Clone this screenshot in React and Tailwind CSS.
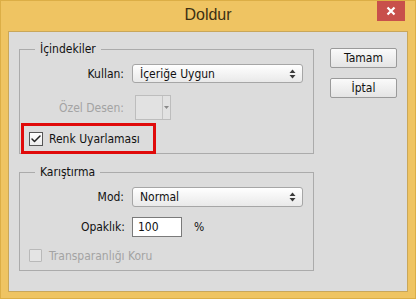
import { Check } from "lucide-react"

const ui = { fontFamily: '"DejaVu Sans Condensed", "DejaVu Sans", sans-serif' }

function Arrows() {
  return (
    <svg width="7" height="10" viewBox="0 0 7 10" className="shrink-0">
      <path d="M3.5 0.5 L6.5 4 L0.5 4 Z" fill="#3a3a3a" />
      <path d="M3.5 9.5 L6.5 6 L0.5 6 Z" fill="#3a3a3a" />
    </svg>
  )
}

function Select({ value, h }) {
  return (
    <div
      className={`flex w-[171px] items-center justify-between rounded-[3px] border border-[#a6a6a6] bg-gradient-to-b from-white to-[#e9e9e9] pl-[7px] pr-[6px] text-[12px] text-[#111] ${h}`}
    >
      <span>{value}</span>
      <Arrows />
    </div>
  )
}

function Group({ title, className, children }) {
  return (
    <div className={`relative w-[295px] border border-[#ababab] ${className}`}>
      <span className="absolute left-[15px] top-[-9px] bg-[#dcdcdc] px-[5px] text-[12px] leading-[16px] text-[#111]">
        {title}
      </span>
      {children}
    </div>
  )
}

function Button({ children, className }) {
  return (
    <div
      className={`flex h-[20px] w-[67px] items-center justify-center rounded-[2px] border border-[#9a9a9a] bg-gradient-to-b from-[#fafafa] to-[#e4e4e4] text-[12px] text-[#111] ${className}`}
    >
      {children}
    </div>
  )
}

export default function App() {
  return (
    <div className="h-[299px] w-[416px] overflow-hidden border border-[#dcae46] bg-[#efc462]" style={ui}>
      <div className="relative h-[30px]">
        <div
          className="pt-[4px] text-center text-[16px] leading-[20px] text-[#3d3013]"
          style={{ fontFamily: '"Liberation Sans", sans-serif' }}
        >
          Doldur
        </div>
        <div className="absolute right-[10px] top-[-1px] flex h-[21px] w-[28px] items-center justify-center bg-[#c8504b]">
          <svg width="10" height="10" viewBox="0 0 10 10">
            <path d="M1.5 1.5 L8.5 8.5 M8.5 1.5 L1.5 8.5" stroke="white" strokeWidth="2.2" />
          </svg>
        </div>
      </div>

      <div className="ml-[7px] flex h-[261px] w-[400px] border border-[#c9a75a] bg-[#dcdcdc]">
        <div className="pl-[10px] pt-[17px]">
          <Group title="İçindekiler" className="h-[105px]">
            <div className="mt-[14px] flex h-[19px] items-center">
              <span className="w-[105px] pr-[1px] text-right text-[12px] text-[#111]">Kullan:</span>
              <div className="ml-[7px]">
                <Select value="İçeriğe Uygun" h="h-[19px]" />
              </div>
            </div>
            <div className="mt-[12px] flex h-[25px] items-center">
              <span className="w-[105px] pr-[1px] text-right text-[12px] text-[#a3a3a3]">Özel Desen:</span>
              <div className="ml-[10px] flex h-[25px] w-[36px] border border-[#bdbdbd] bg-[#e2e2e2]">
                <div className="flex-1" />
                <div className="flex w-[8px] items-center justify-center border-l border-[#c4c4c4]">
                  <svg width="5" height="3" viewBox="0 0 5 3">
                    <path d="M0 0 L5 0 L2.5 3 Z" fill="#8a8a8a" />
                  </svg>
                </div>
              </div>
            </div>
            <div className="relative ml-[1px] mt-[3px] flex h-[31px] w-[135px] items-center border-[3px] border-[#e00a0a] pl-[5px]">
              <div className="flex h-[14px] w-[14px] items-center justify-center border border-[#555] bg-gradient-to-b from-white to-[#ececec]">
                <Check size={12} strokeWidth={3} color="#222" />
              </div>
              <span className="ml-[6px] text-[12px] text-[#111]">Renk Uyarlaması</span>
            </div>
          </Group>

          <Group title="Karıştırma" className="mt-[18px] h-[99px]">
            <div className="mt-[14px] flex h-[20px] items-center">
              <span className="w-[104px] text-right text-[12px] text-[#111]">Mod:</span>
              <div className="ml-[8px]">
                <Select value="Normal" h="h-[20px]" />
              </div>
            </div>
            <div className="mt-[10px] flex h-[20px] items-center">
              <span className="w-[105px] text-right text-[12px] text-[#111]">Opaklık:</span>
              <div className="ml-[7px] flex h-[20px] w-[50px] items-center border border-[#7a7a7a] bg-white pl-[5px] text-[12px] text-[#111]">
                100
              </div>
              <span className="ml-[12px] text-[12px] text-[#111]">%</span>
            </div>
            <div className="ml-[9px] mt-[12px] flex h-[13px] items-center">
              <div className="h-[13px] w-[13px] rounded-[1px] border border-[#b9b9b9] bg-[#e4e4e4]" />
              <span className="ml-[7px] text-[12px] text-[#a3a3a3]">Transparanlığı Koru</span>
            </div>
          </Group>
        </div>

        <div className="ml-[16px] pt-[16px]">
          <Button className="border-[#7ea4c9]">Tamam</Button>
          <Button className="mt-[10px]">İptal</Button>
        </div>
      </div>
    </div>
  )
}
